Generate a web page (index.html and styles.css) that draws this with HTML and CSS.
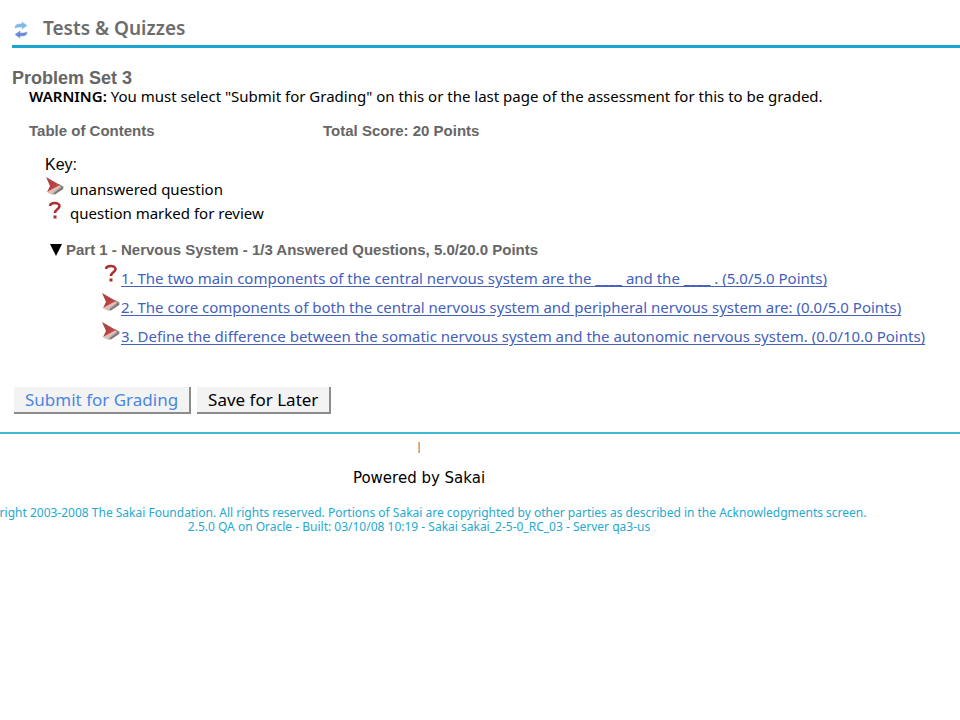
FILE: index.html
```html
<!DOCTYPE html>
<html lang="en">
<head>
    <meta charset="UTF-8">
    <meta name="viewport" content="width=device-width, initial-scale=1.0">
    <title>Tests &amp; Quizzes</title>
    <link rel="stylesheet" href="styles.css">
</head>
<body>
    <svg class="symbols" aria-hidden="true">
        <defs>
            <linearGradient id="red" x1="0" y1="0" x2="1" y2="1">
                <stop offset="0" stop-color="#a04a4a"/>
                <stop offset="0.5" stop-color="#b84040"/>
                <stop offset="1" stop-color="#c4605a"/>
            </linearGradient>
            <linearGradient id="shade" x1="0" y1="1" x2="1" y2="0">
                <stop offset="0" stop-color="#d5cfcd"/>
                <stop offset="1" stop-color="#77726f"/>
            </linearGradient>
            <symbol id="arrow" viewBox="0 0 20 20">
                <path d="M14 7 L19 10 L8 18 L5 17 Z" fill="url(#shade)"/>
                <path d="M2 15 L14 8 L16 10 L5 17 Z" fill="#e3bdb8"/>
                <path d="M1 0 L15 8 L2 15 L5 9 Z" fill="url(#red)"/>
                <path d="M9 17 L18 11" stroke="#7d7876" stroke-width="2"/>
            </symbol>
            <symbol id="review" viewBox="0 0 16 20">
                <path d="M3 5 C3.5 1 12.5 1 12.5 5 C12.5 8.5 8 8 8 12" fill="none" stroke="#a8322f" stroke-width="2.6"/>
                <rect x="6.5" y="14.5" width="3" height="3" fill="#a8322f"/>
            </symbol>
        </defs>
    </svg>

    <header class="tool-header">
        <a class="reload" href="#" aria-label="Reload">
            <svg width="16" height="18" viewBox="0 0 16 18">
                <path d="M2 7 C2 3 5 3 9 3 L9 1 L14 4.5 L9 8 L9 6 C6 6 4 6 2 7 Z" fill="#7fb9ea" stroke="#8ec0e8" stroke-width="0.6"/>
                <path d="M14 11 C14 15 11 15 7 15 L7 17 L2 13.5 L7 10 L7 12 C10 12 12 12 14 11 Z" fill="#6689d6" stroke="#8ba4de" stroke-width="0.6"/>
            </svg>
        </a>
        <h1>Tests &amp; Quizzes</h1>
    </header>

    <main class="content">
        <h2>Problem Set 3</h2>
        <p class="warning"><b>WARNING:</b> You must select "Submit for Grading" on this or the last page of the assessment for this to be graded.</p>

        <div class="summary">
            <h3>Table of Contents</h3>
            <h3>Total Score: 20 Points</h3>
        </div>

        <div class="key">
            <p class="key-title">Key:</p>
            <p class="key-row"><svg class="arrow"><use href="#arrow"/></svg> unanswered question</p>
            <p class="key-row"><svg class="review"><use href="#review"/></svg> question marked for review</p>
        </div>

        <section class="part">
            <h3><svg class="toggle" viewBox="0 0 12 12"><path d="M0 0 H12 L6 12 Z"/></svg>Part 1 - Nervous System - 1/3 Answered Questions, 5.0/20.0 Points</h3>
            <ul class="questions">
                <li><svg class="review"><use href="#review"/></svg><a href="#">1. The two main components of the central nervous system are the ____ and the ____ . (5.0/5.0 Points)</a></li>
                <li><svg class="arrow"><use href="#arrow"/></svg><a href="#">2. The core components of both the central nervous system and peripheral nervous system are: (0.0/5.0 Points)</a></li>
                <li><svg class="arrow"><use href="#arrow"/></svg><a href="#">3. Define the difference between the somatic nervous system and the autonomic nervous system. (0.0/10.0 Points)</a></li>
            </ul>
        </section>

        <div class="actions">
            <button type="button" class="primary">Submit for Grading</button>
            <button type="button">Save for Later</button>
        </div>
    </main>

    <footer class="footer">
        <span class="divider">|</span>
        <p class="powered">Powered by Sakai</p>
        <p class="copyright">Copyright 2003-2008 The Sakai Foundation. All rights reserved. Portions of Sakai are copyrighted by other parties as described in the Acknowledgments screen.</p>
        <p class="copyright">2.5.0 QA on Oracle - Built: 03/10/08 10:19 - Sakai sakai_2-5-0_RC_03 - Server qa3-us</p>
    </footer>
</body>
</html>
```
FILE: styles.css
```css
body {
    margin: 0;
    background-color: #fff;
    color: #000;
    font-family: "Noto Sans", "Trebuchet MS", sans-serif;
    font-size: 15px;
    overflow-x: hidden;
}
h1, h2, h3, p, ul {
    margin: 0;
    padding: 0;
}
.symbols {
    position: absolute;
    width: 0;
    height: 0;
}
.tool-header {
    display: flex;
    align-items: center;
    gap: 14px;
    height: 34px;
    margin-left: 12px;
    padding-top: 11px;
    border-bottom: 3px solid #18a5cf;
}
.reload {
    display: flex;
    padding: 4px 0 0 1px;
}
.tool-header h1 {
    color: #6c6c6c;
    font-size: 19px;
    font-weight: 600;
}
.content {
    padding: 20px 12px 18px;
    border-bottom: 2px solid #3fb9d9;
    white-space: nowrap;
}
.content h2 {
    color: #666;
    font: bold 18px/20px "Liberation Sans", Arial, sans-serif;
}
.content h3 {
    color: #666;
    font: bold 15px/18px "Liberation Sans", Arial, sans-serif;
}
.warning {
    padding-left: 17px;
    line-height: 16px;
}
.warning b {
    font-weight: 600;
}
.summary {
    display: grid;
    grid-template-columns: 294px 1fr;
    padding: 18px 0 0 17px;
}
.key {
    padding: 13px 0 0 33px;
}
.key-title {
    font: 16px/24px "Liberation Sans", Arial, sans-serif;
}
.key-row {
    display: flex;
    gap: 5px;
    line-height: 24px;
}
.arrow {
    width: 20px;
    height: 20px;
}
.review {
    width: 20px;
    height: 20px;
}
.part {
    padding: 16px 0 0 38px;
}
.part h3 {
    display: flex;
    align-items: center;
    gap: 4px;
}
.toggle {
    width: 12px;
    height: 12px;
}
.questions {
    padding: 5px 0 0 51px;
    list-style: none;
}
.questions li {
    display: flex;
    line-height: 29px;
}
.questions a {
    color: #4560bd;
    text-underline-offset: 2px;
}
.actions {
    display: flex;
    gap: 6px;
    padding: 36px 0 0 2px;
}
.actions button {
    height: 27px;
    padding: 0 11px;
    border: 0 solid #8c8c8c;
    border-width: 0 2px 2px 0;
    background-color: #f3f3f3;
    color: #000;
    font-family: inherit;
    font-size: 17px;
    line-height: 24px;
}
.actions .primary {
    color: #4a86e0;
}
.footer {
    display: flex;
    flex-direction: column;
    align-items: center;
    margin-right: 122px;
    padding-top: 4px;
    white-space: nowrap;
}
.divider {
    color: #444;
    font-size: 10px;
    line-height: 16px;
}
.powered {
    padding: 12px 0 16px;
    font: 15px/24px "DejaVu Sans", Verdana, sans-serif;
}
.copyright {
    color: #25a9cf;
    font-size: 12px;
    line-height: 14px;
}
```
